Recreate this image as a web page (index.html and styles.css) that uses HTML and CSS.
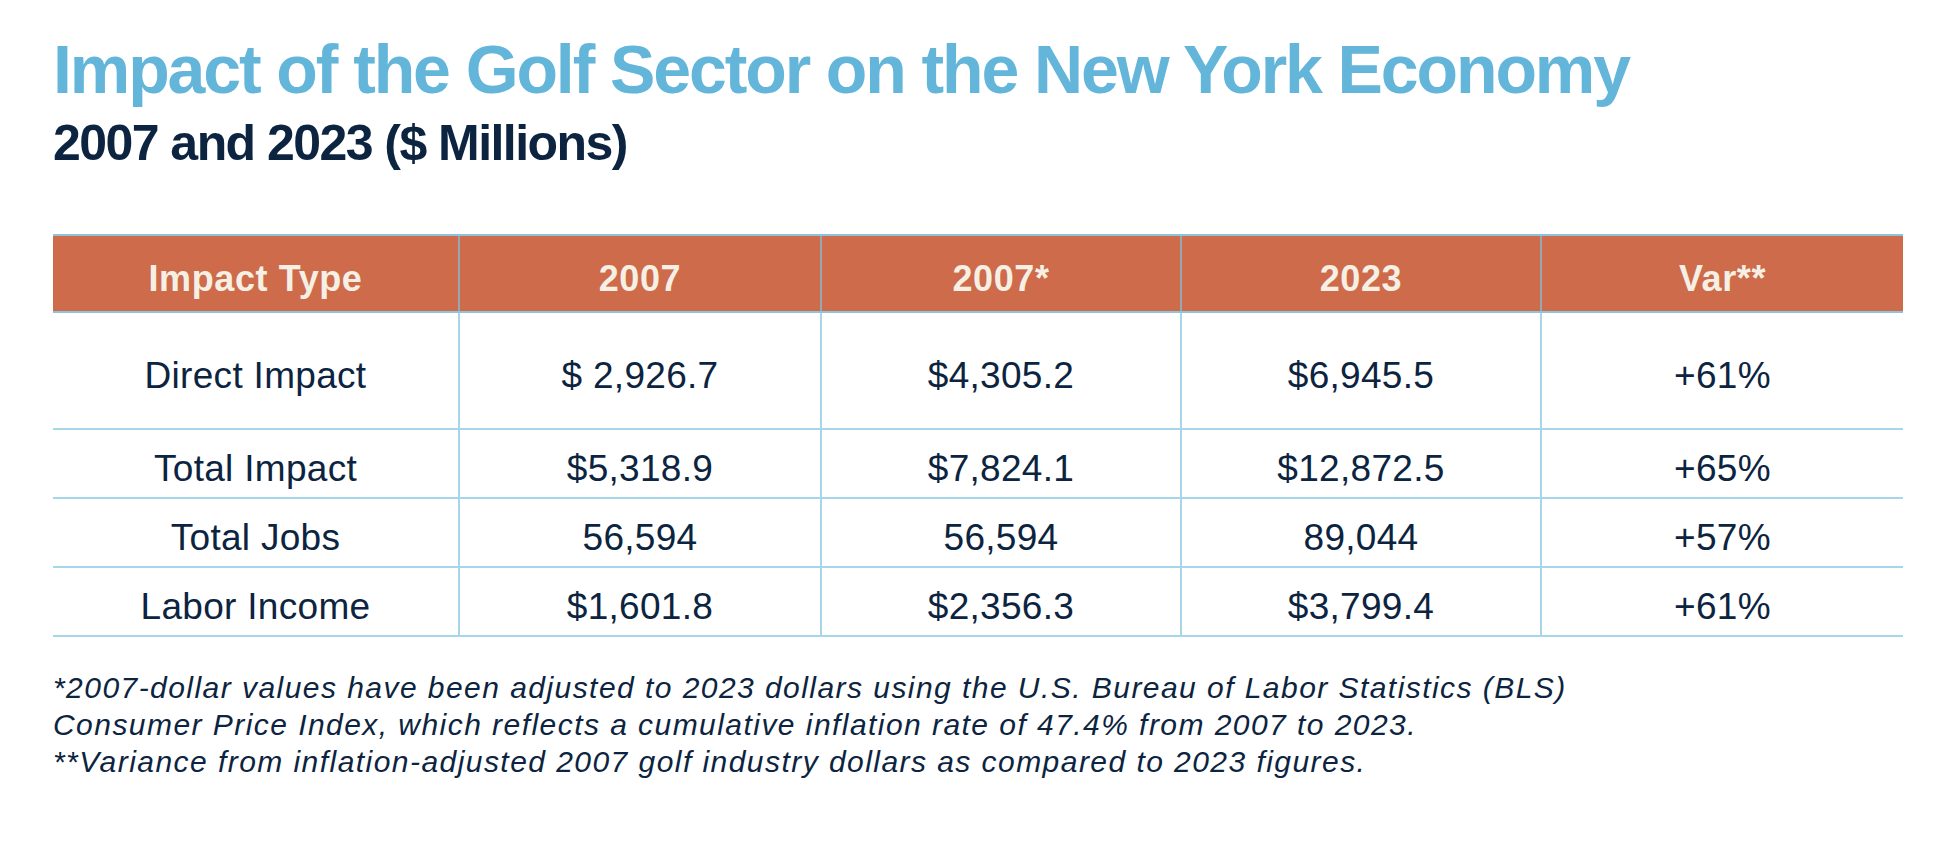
FILE: index.html
```html
<!DOCTYPE html>
<html lang="en">
<head>
<meta charset="utf-8">
<title>Impact of the Golf Sector on the New York Economy</title>
<link rel="stylesheet" href="styles.css">
</head>
<body>
<main class="page">
  <h1 class="title">Impact of the Golf Sector on the New York Economy</h1>
  <h2 class="subtitle">2007 and 2023 ($ Millions)</h2>

  <div class="table">
    <div class="row head">
      <div class="cell">Impact Type</div>
      <div class="cell">2007</div>
      <div class="cell">2007*</div>
      <div class="cell">2023</div>
      <div class="cell">Var**</div>
    </div>
    <div class="row tall">
      <div class="cell">Direct Impact</div>
      <div class="cell">$ 2,926.7</div>
      <div class="cell">$4,305.2</div>
      <div class="cell">$6,945.5</div>
      <div class="cell">+61%</div>
    </div>
    <div class="row">
      <div class="cell">Total Impact</div>
      <div class="cell">$5,318.9</div>
      <div class="cell">$7,824.1</div>
      <div class="cell">$12,872.5</div>
      <div class="cell">+65%</div>
    </div>
    <div class="row">
      <div class="cell">Total Jobs</div>
      <div class="cell">56,594</div>
      <div class="cell">56,594</div>
      <div class="cell">89,044</div>
      <div class="cell">+57%</div>
    </div>
    <div class="row">
      <div class="cell">Labor Income</div>
      <div class="cell">$1,601.8</div>
      <div class="cell">$2,356.3</div>
      <div class="cell">$3,799.4</div>
      <div class="cell">+61%</div>
    </div>
  </div>

  <div class="notes">
    <p class="note">*2007-dollar values have been adjusted to 2023 dollars using the U.S. Bureau of Labor Statistics (BLS)</p>
    <p class="note">Consumer Price Index, which reflects a cumulative inflation rate of 47.4% from 2007 to 2023.</p>
    <p class="note">**Variance from inflation-adjusted 2007 golf industry dollars as compared to 2023 figures.</p>
  </div>
</main>
</body>
</html>
```

FILE: styles.css
```css
html, body {
  margin: 0;
  padding: 0;
  background: #ffffff;
}

.page {
  padding: 35px 0 0 53px;
  font-family: "Liberation Sans", Arial, sans-serif;
  color: #0c2440;
}

.title {
  margin: 0;
  font-size: 68px;
  line-height: 68px;
  font-weight: 700;
  color: #63b5da;
  letter-spacing: -2.1px;
}

.subtitle {
  margin: 15px 0 0 0;
  font-size: 50px;
  line-height: 50px;
  font-weight: 700;
  color: #0c2440;
  letter-spacing: -1.55px;
}

.table {
  margin-top: 66px;
  width: 1850px;
  border-top: 2px solid #8fc3da;
}

.row {
  display: grid;
  grid-template-columns: 407px 362px 360px 360px 361px;
  height: 67px;
  border-bottom: 2px solid #a6d6ea;
}

.row .cell {
  border-right: 2px solid #a6d6ea;
  text-align: center;
  font-size: 37px;
  line-height: 37px;
  padding-top: 20px;
  box-sizing: border-box;
  letter-spacing: 0.3px;
}

.row .cell:last-child {
  border-right: none;
}

.row.head {
  height: 75px;
  background: #cd6b4b;
  border-bottom-color: #8fc3da;
}

.row.head .cell {
  color: #f6efe4;
  font-weight: 700;
  font-size: 36px;
  line-height: 36px;
  padding-top: 25px;
  border-right-color: #93a8b2;
  letter-spacing: 0.6px;
}

.row.tall {
  height: 115px;
}

.row.tall .cell {
  padding-top: 44px;
}

.notes {
  margin-top: 32px;
}

.note {
  margin: 0;
  font-size: 30px;
  line-height: 37px;
  font-style: italic;
  color: #0c2440;
  letter-spacing: 1.45px;
}
```
